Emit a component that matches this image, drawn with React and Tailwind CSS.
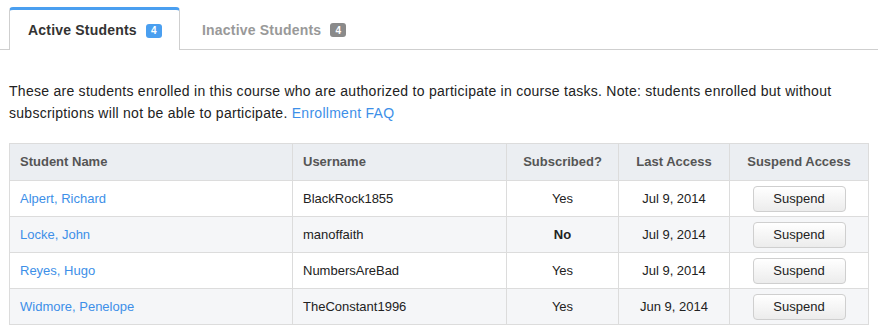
const students = [
  { name: 'Alpert, Richard', username: 'BlackRock1855', subscribed: true, lastAccess: 'Jul 9, 2014' },
  { name: 'Locke, John', username: 'manoffaith', subscribed: false, lastAccess: 'Jul 9, 2014' },
  { name: 'Reyes, Hugo', username: 'NumbersAreBad', subscribed: true, lastAccess: 'Jul 9, 2014' },
  { name: 'Widmore, Penelope', username: 'TheConstant1996', subscribed: true, lastAccess: 'Jun 9, 2014' },
];

export default function App() {
  return (
    <div className="min-h-screen bg-white text-[#222] font-['Liberation_Sans',Arial,sans-serif]">
      {/* Tabs */}
      <div className="flex items-end h-[50px] border-b border-[#cfcfcf] pl-[9px]">
        <div className="flex items-center h-[43px] w-[171px] -mb-px bg-white border border-b-0 border-[#cfcfcf] border-t-[3px] border-t-[#4a9ff0] rounded-t-[4px] pl-[18px]">
          <span className="text-[14px] font-bold text-[#333] tracking-[0.2px] mt-[1px]">Active Students</span>
          <span className="ml-[9px] mt-[1px] w-[16px] h-[14px] rounded-[3px] bg-[#4a9ff0] text-white text-[10px] font-bold flex items-center justify-center">4</span>
        </div>
        <div className="flex items-center h-[43px] pl-[22px]">
          <span className="text-[14px] font-bold text-[#999] tracking-[0.2px] mt-[5px]">Inactive Students</span>
          <span className="ml-[9px] mt-[5px] w-[16px] h-[14px] rounded-[3px] bg-[#8a8a8a] text-white text-[10px] font-bold flex items-center justify-center">4</span>
        </div>
      </div>

      {/* Intro */}
      <p className="px-[9px] pt-[30px] text-[14px] leading-[22px] tracking-[0.27px] text-[#222]">
        These are students enrolled in this course who are authorized to participate in course tasks. Note: students enrolled but without subscriptions will not be able to participate.{' '}
        <a className="text-[#3d8fe8]">Enrollment FAQ</a>
      </p>

      {/* Table */}
      <div className="px-[9px] pt-[19px]">
        <table className="w-[860px] border-collapse text-[13px]">
          <thead>
            <tr className="bg-[#ebeef2] h-[37px] text-[#555] font-bold">
              <th className="w-[283px] border border-[#dcdcdc] text-left pl-[10px] font-bold">Student Name</th>
              <th className="w-[214px] border border-[#dcdcdc] text-left pl-[10px] font-bold">Username</th>
              <th className="w-[112px] border border-[#dcdcdc] text-center font-bold">Subscribed?</th>
              <th className="w-[111px] border border-[#dcdcdc] text-center font-bold">Last Access</th>
              <th className="border border-[#dcdcdc] text-center font-bold">Suspend Access</th>
            </tr>
          </thead>
          <tbody>
            {students.map((s, i) => (
              <tr key={s.username} className={`h-[36px] ${i % 2 === 1 ? 'bg-[#f5f6f8]' : 'bg-white'}`}>
                <td className="border border-[#dcdcdc] pl-[10px] text-[#3d8fe8]">{s.name}</td>
                <td className="border border-[#dcdcdc] pl-[10px] text-[#222]">{s.username}</td>
                <td className={`border border-[#dcdcdc] text-center text-[#222] ${s.subscribed ? '' : 'font-bold'}`}>
                  {s.subscribed ? 'Yes' : 'No'}
                </td>
                <td className="border border-[#dcdcdc] text-center text-[#222]">{s.lastAccess}</td>
                <td className="border border-[#dcdcdc] text-center">
                  <button className="w-[93px] h-[26px] rounded-[4px] border border-[#cfcfcf] bg-gradient-to-b from-white to-[#ececec] text-[13px] text-[#222]">
                    Suspend
                  </button>
                </td>
              </tr>
            ))}
          </tbody>
        </table>
      </div>
    </div>
  );
}
